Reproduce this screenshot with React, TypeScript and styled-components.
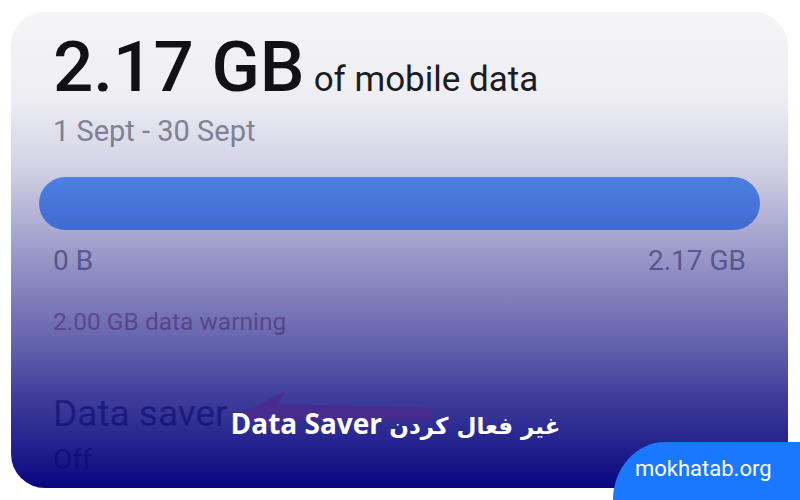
import React from "react";
import styled, { createGlobalStyle } from "styled-components";

const GlobalStyle = createGlobalStyle`
  html, body {
    margin: 0;
    padding: 0;
    background: #ffffff;
  }
  body {
    font-family: Roboto, "Liberation Sans", sans-serif;
  }
`;

const Page = styled.div`
  position: relative;
  width: 800px;
  height: 500px;
  box-sizing: border-box;
  padding: 12px 12px 12px 11px;
  overflow: hidden;
`;

const Card = styled.div`
  position: relative;
  height: 100%;
  box-sizing: border-box;
  display: flex;
  flex-direction: column;
  padding: 19px 28px 0;
  border-radius: 34px;
  background: #f5f5f7;
  overflow: hidden;
`;

const Row = styled.div`
  padding: 0 14px;
  line-height: 1;
`;

const TitleRow = styled(Row)`
  display: flex;
  align-items: baseline;
`;

const Amount = styled.span`
  font-size: 71px;
  font-weight: 500;
  color: #111114;
`;

const Unit = styled.span`
  margin-left: 9px;
  font-size: 35px;
  color: #1c1c20;
`;

const Period = styled(Row)`
  margin-top: 15px;
  font-size: 29px;
  color: #8c8d98;
`;

const Bar = styled.div`
  height: 53px;
  margin-top: 31px;
  border-radius: 27px;
  background: #5c9af6;
`;

const Scale = styled(Row)`
  display: flex;
  justify-content: space-between;
  margin-top: 17px;
  font-size: 28px;
  color: #8e8e9a;
`;

const Warning = styled(Row)`
  margin-top: 35px;
  font-size: 24.5px;
  color: #c49a9a;
`;

const SettingTitle = styled(Row)`
  margin-top: 60px;
  font-size: 37px;
  color: #777780;
`;

const SettingValue = styled(Row)`
  margin-top: 14px;
  font-size: 28px;
  color: #777780;
`;

const Shade = styled.div`
  position: absolute;
  inset: 0;
  pointer-events: none;
  background: linear-gradient(
    to bottom,
    rgba(4, 2, 125, 0) 0%,
    rgba(4, 2, 125, 0.03) 18%,
    rgba(4, 2, 125, 0.15) 33%,
    rgba(4, 2, 125, 0.37) 50%,
    rgba(4, 2, 125, 0.49) 60%,
    rgba(4, 2, 125, 0.62) 71%,
    rgba(4, 2, 125, 0.755) 81%,
    rgba(4, 2, 125, 0.86) 90%,
    rgba(4, 2, 125, 0.98) 100%
  );
`;

const Pointer = styled.svg`
  position: absolute;
  inset: 0;
  width: 100%;
  height: 100%;
  pointer-events: none;
`;

const Caption = styled.div`
  position: absolute;
  top: 397px;
  left: 0;
  right: 8px;
  text-align: center;
  font-family: "Open Sans", "DejaVu Sans", sans-serif;
  font-size: 28px;
  font-weight: 700;
  line-height: 1;
  color: #ffffff;
`;

const Persian = styled.span`
  font-family: "DejaVu Sans", sans-serif;
  font-size: 23px;
`;

const Badge = styled.div`
  position: absolute;
  left: 613px;
  top: 442px;
  right: 0;
  bottom: 0;
  box-sizing: border-box;
  padding: 16px 0 0 22px;
  border-top-left-radius: 52px 58px;
  background: #1a78ff;
  font-family: Roboto, "Liberation Sans", sans-serif;
  font-size: 22px;
  line-height: 1;
  color: #ffffff;
`;

export default function App() {
  return (
    <Page>
      <GlobalStyle />
      <Card>
        <TitleRow>
          <Amount>2.17 GB</Amount>
          <Unit>of mobile data</Unit>
        </TitleRow>
        <Period>1 Sept - 30 Sept</Period>
        <Bar />
        <Scale>
          <span>0 B</span>
          <span>2.17 GB</span>
        </Scale>
        <Warning>2.00 GB data warning</Warning>
        <SettingTitle>Data saver</SettingTitle>
        <SettingValue>Off</SettingValue>
        <Shade />
        <Pointer viewBox="0 0 777 476" preserveAspectRatio="none">
          <polygon
            points="227,403 273,380 267,392 420,396 420,408 267,408 273,422"
            fill="#4a2a8e"
            opacity="0.9"
          />
        </Pointer>
        <Caption dir="rtl">
          <Persian>غیر فعال کردن</Persian> Data Saver
        </Caption>
      </Card>
      <Badge>mokhatab.org</Badge>
    </Page>
  );
}
